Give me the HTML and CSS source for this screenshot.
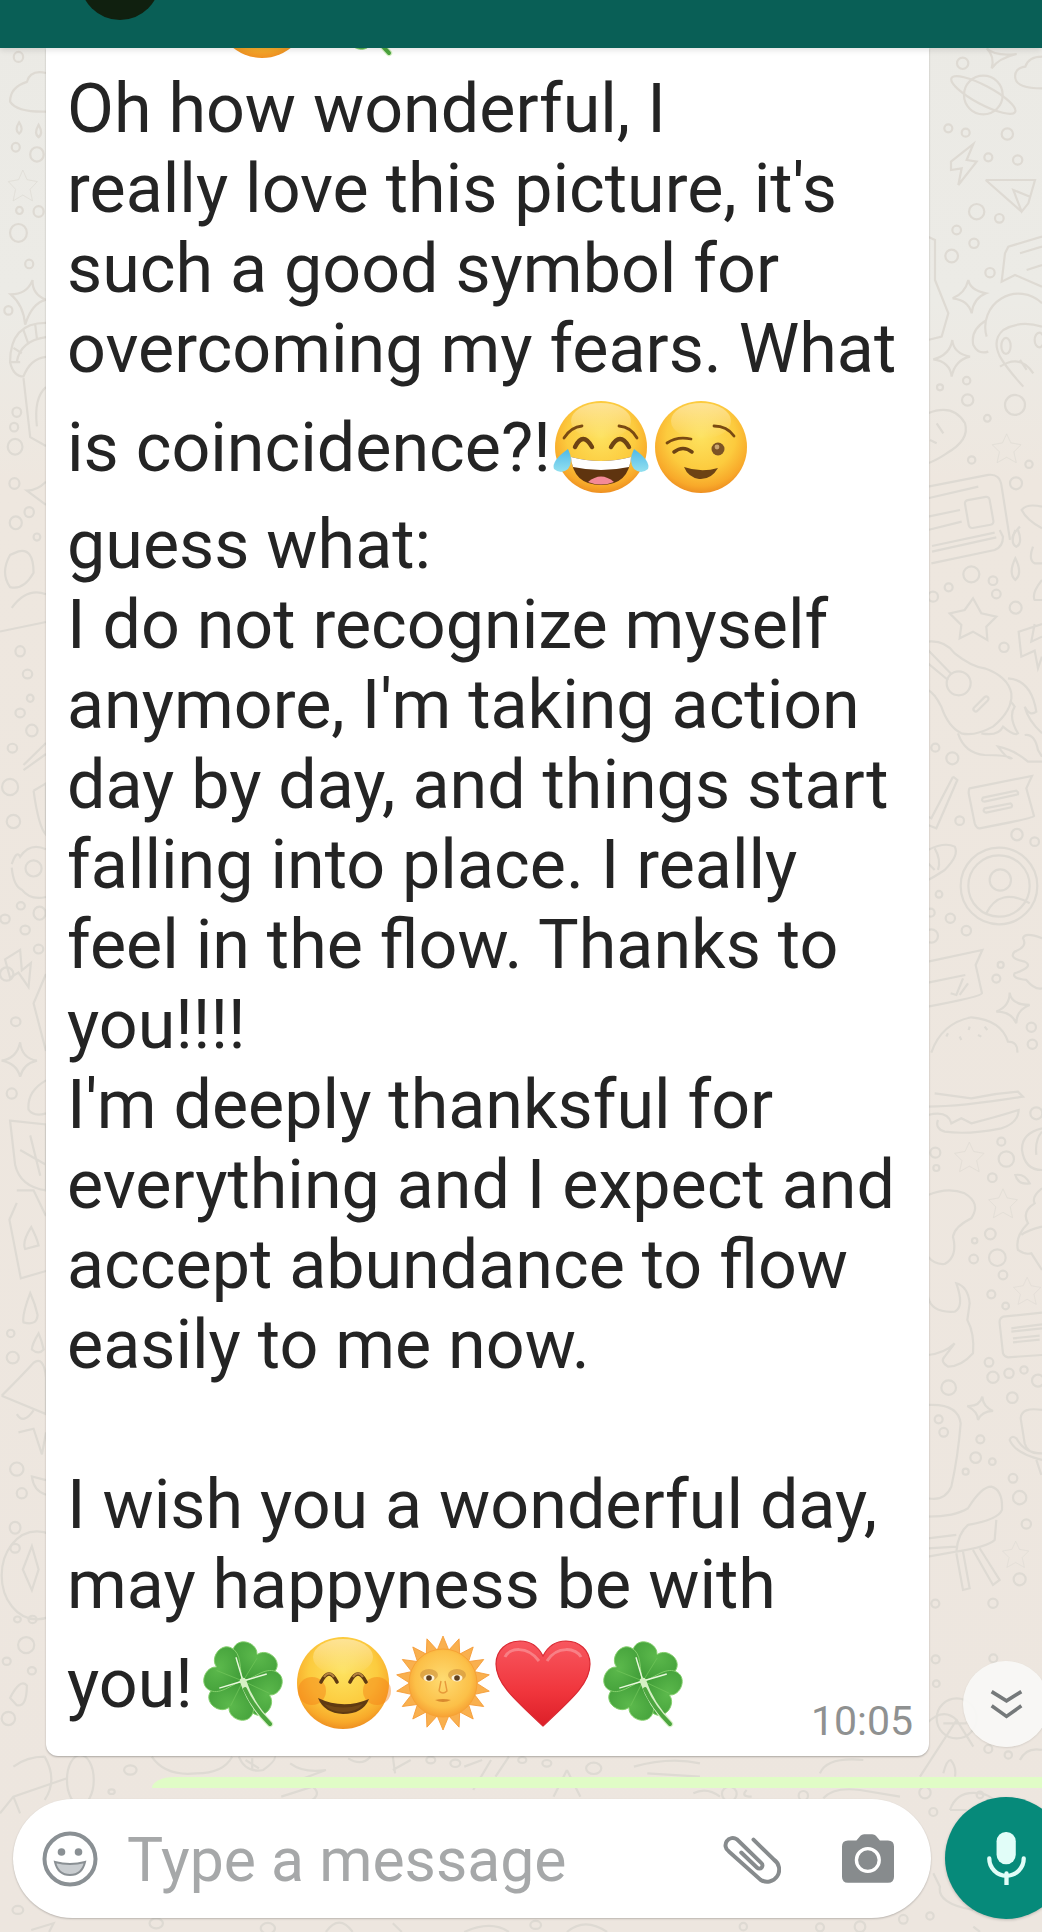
FILE: index.html
```html
<!DOCTYPE html>
<html lang="en">
<head>
<meta charset="utf-8">
<title>Chat</title>
<link rel="stylesheet" href="styles.css">
</head>
<body>
<div class="page">
  <svg class="wallpaper" viewBox="0 0 1042 1932" aria-hidden="true">
    <defs>
      <radialGradient id="face" cx="50%" cy="38%" r="62%">
        <stop offset="0" stop-color="#fde25f"/><stop offset=".6" stop-color="#fccb3e"/><stop offset=".88" stop-color="#f8a92a"/><stop offset="1" stop-color="#ee9022"/>
      </radialGradient>
      <linearGradient id="sheen" x1="0" y1="0" x2="0" y2="1">
        <stop offset="0" stop-color="#fff" stop-opacity=".45"/><stop offset="1" stop-color="#fff" stop-opacity="0"/>
      </linearGradient>
      <linearGradient id="tear" x1="0" y1="0" x2="0" y2="1">
        <stop offset="0" stop-color="#4fb9e8"/><stop offset="1" stop-color="#93e0ef"/>
      </linearGradient>
      <linearGradient id="heartfill" x1="0" y1="0" x2="0" y2="1">
        <stop offset="0" stop-color="#f8575f"/><stop offset=".6" stop-color="#f0353c"/><stop offset="1" stop-color="#dc1f28"/>
      </linearGradient>
      <radialGradient id="sunface" cx="50%" cy="45%" r="55%">
        <stop offset="0" stop-color="#fedb72"/><stop offset=".75" stop-color="#fcc048"/><stop offset="1" stop-color="#f7a234"/>
      </radialGradient>
      <radialGradient id="leaf" cx="50%" cy="25%" r="75%">
        <stop offset="0" stop-color="#5cb94c"/><stop offset="1" stop-color="#3d9a36"/>
      </radialGradient>
      <symbol id="ds" viewBox="0 0 100 100"><path d="M50 2 L64 32 L98 38 L74 62 L82 98 L50 80 L18 98 L26 62 L2 38 L36 32Z"/></symbol>

      <symbol id="e-joy" viewBox="0 0 100 100">
        <circle cx="50" cy="50" r="46" fill="url(#face)"/>
        <ellipse cx="50" cy="24" rx="30" ry="18" fill="url(#sheen)"/>
        <path d="M13 41 Q20 30 31 29 M68 29 Q80 30 86 41" fill="none" stroke="#7a4a12" stroke-width="2.8" stroke-linecap="round"/>
        <path d="M24 50 Q32 34 41 50 M60 50 Q69 34 78 50" fill="none" stroke="#6d4314" stroke-width="4.4" stroke-linecap="round"/>
        <path d="M20 60 Q50 68 80 60 Q78 88 50 88 Q22 88 20 60Z" fill="#5f340f"/>
        <path d="M20 60 Q50 68 80 60 Q80 65 78 70 Q50 76 22 70 Q20 65 20 60Z" fill="#fff"/>
        <path d="M37 85 Q50 74 63 85 Q50 90 37 85Z" fill="#f48a98"/>
        <path d="M17 52 Q23 64 17 72 Q10 78 3 72 Q0 64 17 52Z" fill="url(#tear)"/>
        <path d="M83 52 Q77 64 83 72 Q90 78 97 72 Q100 64 83 52Z" fill="url(#tear)"/>
      </symbol>

      <symbol id="e-wink" viewBox="0 0 100 100">
        <circle cx="50" cy="50" r="46" fill="url(#face)"/>
        <ellipse cx="50" cy="24" rx="30" ry="18" fill="url(#sheen)"/>
        <path d="M16 46 Q26 39 40 42 M63 29 Q76 29 83 39" fill="none" stroke="#7a4a12" stroke-width="2.8" stroke-linecap="round"/>
        <path d="M23 55 Q32 48 41 55" fill="none" stroke="#6d4314" stroke-width="3.6" stroke-linecap="round"/>
        <circle cx="67" cy="52" r="6.5" fill="#7b5326"/>
        <circle cx="66" cy="50" r="2.4" fill="#c9a570"/>
        <path d="M33 70 Q50 76 67 71 Q60 83 48 82 Q37 80 33 70Z" fill="#6d4314"/>
      </symbol>

      <symbol id="e-smile" viewBox="0 0 100 100">
        <circle cx="50" cy="50" r="46" fill="url(#face)"/>
        <ellipse cx="50" cy="24" rx="30" ry="18" fill="url(#sheen)"/>
        <circle cx="19" cy="58" r="14" fill="#f47f16" opacity=".45"/>
        <circle cx="84" cy="58" r="14" fill="#f47f16" opacity=".45"/>
        <path d="M28 49 Q36 33 44 49 M57 49 Q65 33 73 49" fill="none" stroke="#5f3a12" stroke-width="3.6" stroke-linecap="round"/>
        <path d="M31 44 Q36 37 41 44 M60 44 Q65 37 70 44" fill="none" stroke="#b58340" stroke-width="2"/>
        <path d="M25 65 Q50 77 76 66 Q70 81 50 81 Q31 80 25 65Z" fill="#5f3a12"/>
        <path d="M31 71 Q50 78 70 71 Q64 79 50 79 Q38 79 31 71Z" fill="#8a5a1c" opacity=".45"/>
      </symbol>

      <symbol id="e-sun" viewBox="0 0 100 100">
        <g fill="#f9b04e" stroke="#f59a35" stroke-width=".8" stroke-linejoin="round">
          <polygon points="50,3 43,20 57,20"/>
          <polygon points="50,3 43,20 57,20" transform="rotate(20 50 50)"/>
          <polygon points="50,3 43,20 57,20" transform="rotate(40 50 50)"/>
          <polygon points="50,3 43,20 57,20" transform="rotate(60 50 50)"/>
          <polygon points="50,3 43,20 57,20" transform="rotate(80 50 50)"/>
          <polygon points="50,3 43,20 57,20" transform="rotate(100 50 50)"/>
          <polygon points="50,3 43,20 57,20" transform="rotate(120 50 50)"/>
          <polygon points="50,3 43,20 57,20" transform="rotate(140 50 50)"/>
          <polygon points="50,3 43,20 57,20" transform="rotate(160 50 50)"/>
          <polygon points="50,3 43,20 57,20" transform="rotate(180 50 50)"/>
          <polygon points="50,3 43,20 57,20" transform="rotate(200 50 50)"/>
          <polygon points="50,3 43,20 57,20" transform="rotate(220 50 50)"/>
          <polygon points="50,3 43,20 57,20" transform="rotate(240 50 50)"/>
          <polygon points="50,3 43,20 57,20" transform="rotate(260 50 50)"/>
          <polygon points="50,3 43,20 57,20" transform="rotate(280 50 50)"/>
          <polygon points="50,3 43,20 57,20" transform="rotate(300 50 50)"/>
          <polygon points="50,3 43,20 57,20" transform="rotate(320 50 50)"/>
          <polygon points="50,3 43,20 57,20" transform="rotate(340 50 50)"/>
        </g>
        <circle cx="50" cy="50" r="34" fill="url(#sunface)" stroke="#f7a234" stroke-width="1"/>
        <ellipse cx="36" cy="42" rx="9" ry="6" fill="#c98a3a" opacity=".55"/>
        <ellipse cx="64" cy="42" rx="9" ry="6" fill="#c98a3a" opacity=".55"/>
        <ellipse cx="36" cy="45" rx="5.5" ry="3.4" fill="#fff3d8"/>
        <ellipse cx="64" cy="45" rx="5.5" ry="3.4" fill="#fff3d8"/>
        <circle cx="36" cy="45" r="2.8" fill="#5f4020"/>
        <circle cx="64" cy="45" r="2.8" fill="#5f4020"/>
        <path d="M46 58 Q50 62 54 58 L52 48 M48 48 L46 58" fill="none" stroke="#e79a3a" stroke-width="1.4"/>
        <path d="M42 67 Q50 65 58 67 Q50 71 42 67Z" fill="#d98a2e"/>
      </symbol>

      <symbol id="e-heart" viewBox="0 0 100 100">
        <path d="M50 93 C20 65 3 50 3 31 C3 17 14 8 27 8 C37 8 45 13 50 23 C55 13 63 8 73 8 C86 8 97 17 97 31 C97 50 80 65 50 93Z" fill="url(#heartfill)" stroke="#d92a33" stroke-width="1.2"/>
        <path d="M12 24 C16 15 34 12 46 28 M54 28 C64 12 84 15 88 24" fill="none" stroke="#fff" stroke-opacity=".28" stroke-width="3"/>
      </symbol>

      <symbol id="e-clover" viewBox="0 0 100 100">
        <g transform="translate(6 5.8) scale(.88)">
          <g fill="url(#leaf)" stroke="#84cf6b" stroke-width="1">
            <path d="M50 47 C40 38 22 32 23 18 C24 6 41 3 48 11 L50 14 L52 11 C59 3 76 6 77 18 C78 32 60 38 50 47Z" transform="rotate(28 50 48)"/>
            <path d="M50 47 C40 38 22 32 23 18 C24 6 41 3 48 11 L50 14 L52 11 C59 3 76 6 77 18 C78 32 60 38 50 47Z" transform="rotate(118 50 48)"/>
            <path d="M50 47 C40 38 22 32 23 18 C24 6 41 3 48 11 L50 14 L52 11 C59 3 76 6 77 18 C78 32 60 38 50 47Z" transform="rotate(208 50 48)"/>
            <path d="M50 47 C40 38 22 32 23 18 C24 6 41 3 48 11 L50 14 L52 11 C59 3 76 6 77 18 C78 32 60 38 50 47Z" transform="rotate(298 50 48)"/>
          </g>
          <path d="M50 48 L66 22 M50 48 L80 62 M50 48 L36 76 M50 48 L20 36" stroke="#6cc156" stroke-width="1"/>
          <path d="M50 48 L42 21 M50 48 L77 40 M50 48 L23 56" stroke="#e8f7dc" stroke-width="1.6"/>
        </g>
        <path d="M50 48 Q58 72 77 91" fill="none" stroke="#d5f0c4" stroke-width="6.4" stroke-linecap="round"/>
        <path d="M52 56 Q60 74 77 91" fill="none" stroke="#4da63f" stroke-width="4" stroke-linecap="round"/>
      </symbol>
    </defs>

    <g class="doodle">
      <g transform="translate(920 40) scale(.3333)">
        <circle cx="190" cy="165" r="58"/><ellipse cx="190" cy="165" rx="108" ry="28" transform="rotate(28 190 165)"/>
        <circle cx="128" cy="70" r="17"/><path d="M200 25 Q225 50 290 42 Q235 55 215 85 Q225 50 200 25Z"/>
        <path d="M366 50 Q326 50 316 80 Q281 85 286 115 Q291 145 366 145"/>
        <circle cx="85" cy="265" r="12"/><circle cx="137" cy="278" r="12"/><circle cx="262" cy="282" r="17"/><circle cx="205" cy="352" r="12"/><circle cx="293" cy="360" r="14"/><circle cx="170" cy="515" r="23"/><circle cx="238" cy="535" r="13"/><circle cx="110" cy="570" r="13"/><circle cx="162" cy="610" r="14"/><circle cx="95" cy="648" r="19"/><circle cx="210" cy="698" r="14"/><circle cx="60" cy="1042" r="9"/><circle cx="140" cy="1022" r="11"/><circle cx="143" cy="1080" r="17"/><circle cx="202" cy="1135" r="10"/><circle cx="155" cy="1260" r="11"/><circle cx="288" cy="1330" r="18"/><circle cx="327" cy="1273" r="11"/>
        <path d="M93 365 L160 312 L140 360 L170 365 L115 435 L125 385 L93 390Z"/>
        <path d="M197 420 L345 420 L325 490 L305 515 L280 450 L330 470 M197 420 L305 515"/>
        <path d="M366 590 L265 620 L255 640 L245 725 L285 705 L366 740 M300 640 L366 620 M320 690 L366 675"/>
        <path d="M145 720 Q150 750 198 760 Q160 775 155 820 Q145 780 98 775 Q135 760 145 720Z"/>
        <path d="M97 900 Q100 940 150 950 Q105 960 95 1010 Q90 965 40 958 Q90 945 97 900Z"/>
        <path d="M200 890 A100 100 0 0 1 366 790 M200 840 Q150 870 160 915 Q175 945 205 935 M366 860 Q300 840 250 870 Q215 900 240 950 Q260 985 310 1040 M240 980 Q300 940 340 1000 M300 960 L320 990"/>
        <ellipse cx="258" cy="918" rx="14" ry="24"/><ellipse cx="358" cy="900" rx="14" ry="22"/><circle cx="285" cy="1095" r="30"/>
        <use href="#ds" x="215" y="1180" width="90" height="90"/>
        <path d="M24 1120 Q100 1090 135 1150 Q150 1200 80 1240 Q50 1260 24 1270 M50 1150 L70 1180 M30 1200 L50 1210"/>
        <path d="M24 1340 L205 1305 Q240 1300 245 1340 L270 1500 M24 1375 L175 1340 M24 1430 L120 1410 M24 1470 L125 1445"/>
        <rect x="140" y="1375" width="75" height="85" rx="10" transform="rotate(-10 177 1417)"/>
        <path d="M24 590 L45 600 L45 720 L85 820 L65 890 L24 900 M366 1400 Q320 1390 305 1410 Q320 1440 366 1465 M300 1460 Q270 1490 280 1500"/>
      </g>

      <g transform="translate(928 530) scale(.3333)">
        <path d="M10 100 L200 60 Q225 50 225 20 L215 0 M12 65 L205 22 M12 48 L200 8"/>
        <path d="M262 85 Q240 130 262 150 Q285 130 262 85Z M315 50 Q300 90 320 100 L342 100 M342 150 Q310 190 320 210 L342 210 M262 0 Q245 40 265 50 Q285 40 270 0"/>
        <circle cx="130" cy="133" r="24"/><circle cx="195" cy="152" r="13"/><circle cx="62" cy="172" r="12"/><circle cx="205" cy="192" r="13"/><circle cx="15" cy="200" r="15"/><circle cx="263" cy="233" r="18"/><circle cx="228" cy="352" r="14"/>
        <path d="M135 205 L160 250 L205 260 L175 290 L178 330 L135 305 L95 325 L100 285 L65 250 L110 240Z"/>
        <path d="M342 282 L272 305 L280 380 L320 362 L330 415 L342 380 M320 282 L310 335 L342 320"/>
        <path d="M0 335 Q50 330 80 370 Q130 410 170 415 Q240 440 250 490 Q255 540 195 590 Q140 620 100 610 Q60 590 40 530 Q20 490 0 480"/>
        <circle cx="92" cy="460" r="36"/><path d="M0 360 L70 432 M0 400 L60 450"/>
        <rect x="130" y="515" width="58" height="14" rx="7" transform="rotate(-45 159 522)"/>
        <path d="M90 610 Q110 670 170 675 Q240 675 250 685 Q240 690 210 650 Q260 660 300 695 L342 695 M160 610 Q210 620 225 590 Q260 620 270 610 Q240 560 260 530 Q250 515 245 515 M240 445 Q310 450 325 545 Q305 560 290 530 Q300 570 342 610 M290 615 Q320 610 330 660 L342 680"/>
        <circle cx="22" cy="653" r="12"/><circle cx="73" cy="685" r="18"/><circle cx="95" cy="872" r="13"/><circle cx="267" cy="914" r="17"/><circle cx="320" cy="935" r="13"/><circle cx="33" cy="1093" r="10"/><circle cx="8" cy="1148" r="12"/><circle cx="67" cy="1165" r="14"/><circle cx="115" cy="1202" r="14"/><circle cx="10" cy="1218" r="20"/><circle cx="218" cy="1305" r="9"/><circle cx="205" cy="1346" r="12"/><circle cx="310" cy="1492" r="14"/><circle cx="313" cy="1543" r="14"/>
        <path d="M75 740 L88 750 L25 895 L0 885 M75 740 L10 865 L0 860"/>
        <path d="M125 775 L312 738 L295 775 L318 858 Q315 865 155 895 Q145 895 140 880 L122 790 Q122 778 125 775Z M165 803 L265 782 Q272 785 270 793 L170 815 Q158 815 165 803Z M170 835 L248 820 Q255 825 250 832 L175 848 Q162 845 170 835Z"/>
        <path d="M0 960 Q50 935 80 950 Q95 975 50 1020 Q20 1040 0 1050 M20 955 Q40 990 30 1020 M0 1000 L20 1020"/>
        <circle cx="213" cy="1068" r="115"/><circle cx="213" cy="1068" r="92"/><circle cx="217" cy="1050" r="32"/><path d="M175 1150 Q215 1070 305 1120"/>
        <path d="M342 1225 Q290 1205 285 1225 Q300 1250 260 1265 Q240 1285 290 1295 Q320 1310 260 1330 Q250 1345 295 1350 Q320 1380 342 1375"/>
        <path d="M0 1295 L163 1260 L143 1305 L162 1390 Q160 1400 0 1430 M0 1358 L112 1335 M68 1390 L85 1395 L105 1345 M95 1395 L120 1360"/>
        <path d="M245 1388 Q250 1425 305 1425 Q265 1440 265 1480 Q250 1445 205 1445 Q245 1430 245 1388Z"/>
        <path d="M10 1568 Q40 1480 130 1462 Q220 1470 240 1535 Q270 1535 268 1568 M60 1510 L55 1520 M95 1520 L100 1530 M125 1490 L122 1500 M150 1515 L160 1520 M170 1490 L178 1500"/>
      </g>

      <g transform="translate(928 1090) scale(.3333)">
        <path d="M0 50 Q100 50 285 20 L270 5 Q200 10 130 25 L20 10 M0 75 Q60 60 70 100 L100 85 L130 100 Q210 80 272 60 Q270 100 220 115 Q120 135 50 125 Q20 115 30 90"/>
        <circle cx="325" cy="70" r="18"/><circle cx="220" cy="155" r="12"/><circle cx="22" cy="188" r="15"/><circle cx="25" cy="234" r="9"/><circle cx="235" cy="207" r="23"/><circle cx="193" cy="263" r="13"/><circle cx="187" cy="432" r="16"/><circle cx="140" cy="452" r="8"/><circle cx="137" cy="507" r="13"/><circle cx="208" cy="503" r="25"/><circle cx="225" cy="555" r="13"/><circle cx="190" cy="613" r="12"/><circle cx="233" cy="648" r="10"/><circle cx="183" cy="817" r="13"/><circle cx="195" cy="862" r="17"/><circle cx="243" cy="850" r="14"/><circle cx="288" cy="840" r="11"/><circle cx="330" cy="872" r="18"/><circle cx="62" cy="893" r="22"/><circle cx="253" cy="923" r="16"/><circle cx="32" cy="988" r="12"/><circle cx="47" cy="1027" r="13"/><circle cx="157" cy="1048" r="12"/><circle cx="143" cy="1103" r="16"/><circle cx="193" cy="1115" r="10"/><circle cx="113" cy="1145" r="9"/><circle cx="255" cy="1165" r="13"/><circle cx="275" cy="1223" r="20"/><circle cx="295" cy="1302" r="14"/><circle cx="275" cy="1468" r="18"/><circle cx="22" cy="1541" r="12"/><circle cx="195" cy="1540" r="14"/>
        <use href="#ds" x="78" y="155" width="92" height="92"/><use href="#ds" x="180" y="295" width="90" height="90"/><use href="#ds" x="255" y="560" width="85" height="85"/><use href="#ds" x="222" y="1352" width="82" height="82"/>
        <path d="M0 315 Q60 290 110 310 Q160 340 130 385 Q80 410 75 440 Q90 500 50 522 Q20 525 0 500"/>
        <path d="M262 255 Q290 250 305 280 Q270 285 262 255Z"/>
        <path d="M342 295 Q310 320 320 340 Q280 365 300 400 Q260 440 270 480 Q290 495 310 490 L342 540 M342 410 Q300 420 280 435"/>
        <path d="M0 620 Q10 670 80 665 Q110 650 85 580 Q120 590 125 640 L118 690 Q140 730 135 790 Q100 830 60 830 Q35 815 50 800 L80 760 Q50 790 0 795"/>
        <path d="M342 668 L225 680 Q213 685 215 700 L225 790 Q228 800 240 802 L342 795 M250 715 L342 703 M250 725 L342 715 M255 745 L335 737 M255 757 L335 749"/>
        <path d="M163 920 Q165 950 195 963 Q160 965 150 990 Q150 965 118 948 Q155 950 163 920Z"/>
        <path d="M342 960 Q280 950 278 985 L290 1060 Q300 1095 342 1090 M342 1110 Q260 1090 245 1050 Q250 1035 265 1045 Q290 1090 342 1090 M325 1110 L340 1155"/>
        <path d="M0 945 Q90 940 98 1000 Q90 1100 70 1190 Q50 1235 0 1225"/>
        <path d="M0 1280 Q80 1280 120 1255 Q160 1190 190 1190 Q225 1200 222 1260 Q210 1290 120 1305 Q90 1330 85 1385 L0 1400 M0 1345 L85 1335 M0 1375 L85 1370 M85 1390 L105 1500 L125 1495 L105 1385 M135 1380 L195 1485 L215 1470 L155 1375 M205 1290 L200 1350 Q180 1370 85 1385"/>
        <path d="M342 115 Q280 130 282 180 Q290 240 342 240 M342 125 Q320 150 325 195"/>
      </g>

      <g transform="translate(0 48) scale(.3356 .357)">
        <circle cx="55" cy="25" r="14"/><circle cx="47" cy="278" r="12"/><circle cx="110" cy="298" r="20"/><circle cx="58" cy="455" r="10"/><circle cx="115" cy="458" r="15"/><circle cx="55" cy="518" r="25"/><circle cx="87" cy="605" r="12"/><circle cx="25" cy="735" r="12"/><circle cx="50" cy="1020" r="13"/><circle cx="42" cy="1062" r="12"/><circle cx="45" cy="1117" r="22"/><circle cx="43" cy="1220" r="15"/><circle cx="87" cy="1300" r="14"/><circle cx="47" cy="1330" r="18"/><circle cx="110" cy="1370" r="10"/>
        <path d="M137 70 Q90 60 80 95 Q30 110 30 150 Q50 180 137 178"/>
        <path d="M57 208 Q42 230 57 240 Q72 230 57 208Z M115 215 Q100 240 115 250 Q130 240 115 215Z"/>
        <use href="#ds" x="22" y="340" width="92" height="90"/>
        <path d="M97 650 Q95 690 137 705 Q95 715 75 775 Q70 720 32 690 Q80 690 97 650Z"/>
        <path d="M137 770 Q30 770 30 880 Q40 920 70 920 Q90 870 137 865 M50 880 Q60 820 137 810 M40 840 L65 855 M70 790 L85 830 M105 775 L110 815 M33 880 L60 880"/>
        <path d="M70 925 L90 1090 L137 1115 M110 1060 Q100 980 137 950 M137 1215 Q110 1240 80 1240 L137 1280"/>
        <path d="M55 1410 Q100 1400 100 1470 Q70 1520 30 1510 Q0 1470 30 1420Z M35 1568 Q80 1510 137 1530"/>
      </g>

      <g transform="translate(0 600) scale(.3356 .7334)">
        <ellipse cx="60" cy="70" rx="14" ry="7"/><ellipse cx="82" cy="101" rx="14" ry="6"/><ellipse cx="90" cy="134" rx="10" ry="5"/><ellipse cx="60" cy="154" rx="14" ry="6"/><ellipse cx="95" cy="178" rx="17" ry="8"/><ellipse cx="37" cy="202" rx="14" ry="6"/><ellipse cx="30" cy="255" rx="24" ry="11"/><ellipse cx="40" cy="302" rx="20" ry="9"/><ellipse cx="100" cy="366" rx="24" ry="11"/><ellipse cx="15" cy="435" rx="14" ry="6"/><ellipse cx="62" cy="417" rx="12" ry="5"/><ellipse cx="75" cy="450" rx="14" ry="6"/><ellipse cx="118" cy="427" rx="18" ry="9"/><ellipse cx="115" cy="476" rx="14" ry="6"/><ellipse cx="20" cy="510" rx="20" ry="9"/><ellipse cx="47" cy="575" rx="14" ry="6"/><ellipse cx="35" cy="673" rx="15" ry="7"/><ellipse cx="32" cy="1000" rx="11" ry="5"/><ellipse cx="38" cy="1033" rx="18" ry="8"/><ellipse cx="50" cy="1185" rx="20" ry="9"/><ellipse cx="65" cy="1218" rx="15" ry="7"/><ellipse cx="45" cy="1293" rx="14" ry="6"/><ellipse cx="52" cy="1390" rx="10" ry="4"/><ellipse cx="97" cy="1390" rx="12" ry="5"/><ellipse cx="78" cy="1425" rx="24" ry="11"/><ellipse cx="20" cy="1447" rx="12" ry="5"/><ellipse cx="95" cy="1460" rx="12" ry="5"/><ellipse cx="25" cy="1525" rx="20" ry="9"/>
        <path d="M0 43 L137 30 M70 225 L137 195 M70 232 L137 210 M100 260 L137 250 L137 320 Q115 310 100 260 M35 360 Q50 340 60 350 Q90 330 137 340 M35 365 Q40 390 65 395 Q90 410 137 405"/>
        <path d="M15 490 L60 477 L65 505 L92 495 L85 528 L55 508 L30 515Z M60 603 Q65 625 110 628 Q70 632 60 650 Q50 632 5 628 Q50 625 60 603Z M137 510 L100 550 L137 615 M137 655 Q80 670 85 695 Q100 705 137 700"/>
        <path d="M30 710 L137 715 L137 805 Q60 800 45 770Z M60 750 L137 770 M90 730 L120 785 M50 805 L100 805 L137 840 M50 822 L28 845 L62 925 L137 915 M93 855 Q65 875 75 885 L115 880 Q110 870 93 855Z M90 945 Q65 975 70 985 Q110 990 112 975 Q105 960 90 945Z M115 1000 Q95 1015 95 1022 Q115 1030 130 1022 Q125 1010 115 1000Z"/>
        <path d="M5 1085 Q60 1060 100 1040 Q130 1030 137 1060 L137 1110L5 1085 M50 1110 Q70 1125 100 1105 M55 1135 L100 1130 L125 1165 L137 1135 M137 1200 L95 1195 Q100 1215 137 1220"/>
        <ellipse cx="110" cy="1330" rx="105" ry="60"/><ellipse cx="45" cy="1265" rx="16" ry="8"/><path d="M95 1290 L68 1322 L95 1350 L115 1322Z M30 1497 Q60 1470 80 1480 Q80 1510 50 1507Z"/>
      </g>

      <g transform="translate(0 1600) scale(.4464 .3333)">
        <ellipse cx="180" cy="540" rx="30" ry="75"/><path d="M0 640 L30 590 L150 535 M45 640 L30 590 M100 470 Q130 540 100 600 M30 500 Q60 470 100 470"/>
        <circle cx="292" cy="510" r="14"/><circle cx="250" cy="575" r="7"/><path d="M340 470 Q370 530 440 520 Q500 520 520 470 M535 470 Q550 520 590 510 Q620 480 615 470 M550 480 L580 505 M565 475 L565 510"/>
        <path d="M650 490 Q680 520 730 510 L670 540 M630 590 L700 560 Q720 580 700 600 M780 475 Q810 500 830 470 M880 510 L920 480 M880 470 L885 520"/>
        <circle cx="965" cy="480" r="10"/><circle cx="1020" cy="490" r="11"/><path d="M1040 500 L1080 480 M1100 480 L1060 570 M1140 470 L1110 530"/>
        <circle cx="1170" cy="480" r="9"/><circle cx="1225" cy="490" r="10"/><circle cx="1330" cy="505" r="17"/><path d="M1270 510 L1240 590 M1270 510 L1300 590 M1420 500 Q1500 470 1568 490 M1450 520 L1568 530"/>
        <circle cx="350" cy="970" r="15"/><path d="M70 990 L120 970 L110 996 M730 996 Q760 940 790 996 M880 970 L900 996 M1040 996 Q1100 960 1140 996 M1270 996 Q1310 950 1360 996"/>
        <circle cx="40" cy="930" r="12"/><circle cx="600" cy="985" r="16"/><circle cx="1200" cy="975" r="12"/>
      </g>
      <g transform="translate(680 1640) scale(.3333)">
        <path d="M420 400 Q440 350 550 360 M740 250 Q790 200 830 240 L720 410 M790 250 L860 250 M830 240 L880 320"/>
        <circle cx="830" cy="235" r="60"/><circle cx="767" cy="58" r="12"/><circle cx="769" cy="131" r="10"/><circle cx="925" cy="327" r="12"/><circle cx="985" cy="345" r="11"/><circle cx="940" cy="55" r="12"/><path d="M790 400 Q800 360 812 360 Q830 380 825 410 M1020 360 Q1040 320 1086 330 M40 460 Q80 440 120 470 M200 450 Q180 470 215 470 M430 475 Q460 440 540 450 L660 470"/>
        <circle cx="735" cy="458" r="17"/><circle cx="760" cy="516" r="12"/><circle cx="370" cy="467" r="14"/><circle cx="148" cy="462" r="22"/><circle cx="900" cy="465" r="10"/><path d="M810 510 Q830 450 900 460 Q960 470 940 520 M810 510 L860 510"/>
        <circle cx="750" cy="828" r="11"/><circle cx="670" cy="838" r="13"/><circle cx="540" cy="860" r="16"/><circle cx="420" cy="862" r="12"/><circle cx="190" cy="860" r="11"/><path d="M760 700 L780 740 Q770 790 880 810 M880 860 L900 876"/>
      </g>
    </g>
  </svg>

  <header class="topbar">
    <div class="avatar"></div>
  </header>

  <main class="chat">
    <article class="bubble">
      <div class="peek">
        <svg class="peek-emoji" role="img" aria-label="smiling face"><use href="#e-smile"/></svg>
        <svg class="peek-emoji" role="img" aria-label="four leaf clover"><use href="#e-clover"/></svg>
      </div>
      <p class="msg">Oh how wonderful, I<br>
really love this picture, it's<br>
such a good symbol for<br>
overcoming my fears. What<br>
is coincidence?!<svg class="emoji" role="img" aria-label="tears of joy"><use href="#e-joy"/></svg><svg class="emoji" role="img" aria-label="winking face"><use href="#e-wink"/></svg><br>
guess what:<br>
I do not recognize myself<br>
anymore, I'm taking action<br>
day by day, and things start<br>
falling into place. I really<br>
feel in the flow. Thanks to<br>
you!!!!<br>
I'm deeply thanksful for<br>
everything and I expect and<br>
accept abundance to flow<br>
easily to me now.<br>
<br>
I wish you a wonderful day,<br>
may happyness be with<br>
you!<svg class="emoji" role="img" aria-label="four leaf clover"><use href="#e-clover"/></svg><svg class="emoji" role="img" aria-label="smiling face"><use href="#e-smile"/></svg><svg class="emoji" role="img" aria-label="sun with face"><use href="#e-sun"/></svg><svg class="emoji" role="img" aria-label="red heart"><use href="#e-heart"/></svg><svg class="emoji" role="img" aria-label="four leaf clover"><use href="#e-clover"/></svg></p>
      <div class="time">10:05</div>
    </article>
    <div class="next-bubble"></div>
  </main>

  <button class="scroll-down" aria-label="Scroll to bottom">
    <svg class="chevrons" viewBox="930 155 100 95"><path d="M935 165 L980 193 L1025 165 M935 208 L980 240 L1025 208"/></svg>
  </button>

  <footer class="composer">
    <div class="input">
      <svg class="icon-smile" viewBox="0 0 56 56">
        <circle cx="28" cy="28" r="25.5"/>
        <circle class="solid" cx="19.5" cy="21" r="3.8"/>
        <circle class="solid" cx="36.5" cy="21" r="3.8"/>
        <path class="mouth" d="M13 31 Q28 35 43 31 Q40 44 28 44 Q16 44 13 31Z"/>
      </svg>
      <span class="placeholder">Type a message</span>
      <svg class="icon-clip" viewBox="130 578 175 155">
        <path d="M222 597 L283 657 A29 29 0 0 1 243 718 L147 632 A19 19 0 0 1 172 596 L246 668 A9 9 0 0 1 233 682 L185 636"/>
      </svg>
      <svg class="icon-camera" viewBox="487 573 155 145">
        <path class="body" d="M487 610 Q487 592 505 592 L530 592 L542 578 Q546 573 553 573 L577 573 Q584 573 588 578 L600 592 L624 592 Q642 592 642 610 L642 700 Q642 718 624 718 L505 718 Q487 718 487 700Z"/>
        <circle class="lens" cx="564" cy="650" r="34"/>
      </svg>
    </div>
    <button class="mic" aria-label="Record voice message">
      <svg class="icon-mic" viewBox="922 575 116 160">
        <rect x="950" y="575" width="58" height="97" rx="28"/>
        <path d="M928 655 A51 51 0 0 0 1032 655 M980 700 L980 735"/>
      </svg>
    </button>
  </footer>
</div>
</body>
</html>
```

FILE: styles.css
```css
* { box-sizing: border-box; }

html, body { margin: 0; padding: 0; }

body {
  width: 1042px;
  height: 1932px;
  overflow: hidden;
  font-family: Roboto, "Liberation Sans", sans-serif;
}

.page {
  position: relative;
  width: 1042px;
  height: 1932px;
  overflow: hidden;
  display: flex;
  flex-direction: column;
  background: linear-gradient(#ebeae5 0, #ecebe6 300px, #eee7df 480px, #ede6df 100%);
}

.wallpaper {
  position: absolute;
  left: 0;
  top: 0;
  width: 1042px;
  height: 1932px;
}

.doodle { fill: none; stroke: #dedad3; stroke-width: 2.2; }
.doodle * { vector-effect: non-scaling-stroke; }

.topbar {
  position: relative;
  z-index: 3;
  flex: none;
  height: 48px;
  background: #095f56;
  box-shadow: 0 2px 6px rgba(0, 0, 0, .12);
  overflow: hidden;
  padding-left: 80px;
}

.avatar {
  width: 80px;
  height: 80px;
  margin-top: -60px;
  border-radius: 50%;
  background: #10200f;
}

.chat {
  position: relative;
  z-index: 1;
  flex: none;
  height: 1749px;
}

.bubble {
  display: flow-root;
  width: 883px;
  height: 1708px;
  margin-left: 46px;
  padding: 0 16px 0 21px;
  background: #fff;
  border-radius: 0 0 12px 12px;
  box-shadow: 0 1px 2px rgba(0, 0, 0, .28);
}

.peek {
  display: flex;
  height: 100px;
  margin-top: -86px;
  margin-bottom: 7px;
  padding-left: 145px;
}

.peek-emoji { width: 100px; height: 100px; flex: none; }

.msg {
  margin: 0;
  font-size: 68.2px;
  line-height: 80px;
  color: #242424;
  white-space: nowrap;
}

.emoji {
  display: inline-block;
  width: 100px;
  height: 100px;
  margin: 8px 0;
  vertical-align: -34px;
}

.time {
  margin-top: -44px;
  text-align: right;
  font-size: 41px;
  line-height: 48px;
  color: #8f9191;
}

.next-bubble {
  height: 11px;
  margin: 21px 0 0 152px;
  background: #e0fcc6;
  border-top-left-radius: 22px 11px;
}

.scroll-down {
  position: absolute;
  z-index: 2;
  left: 963px;
  top: 1661px;
  width: 86px;
  height: 86px;
  padding: 0;
  border: 0;
  border-radius: 50%;
  background: rgba(249, 248, 246, .92);
  box-shadow: 0 1px 2px rgba(0, 0, 0, .1);
  display: flex;
  align-items: center;
  justify-content: center;
}

.chevrons { width: 33px; height: 32px; fill: none; stroke: #75797a; stroke-width: 11; }

.composer {
  position: relative;
  z-index: 1;
  flex: none;
  display: flex;
  align-items: center;
  gap: 14px;
  padding-left: 13px;
  height: 122px;
}

.input {
  flex: none;
  width: 918px;
  height: 119px;
  margin-top: 1px;
  display: flex;
  align-items: center;
  padding: 0 37px 0 29px;
  background: #fff;
  border-radius: 60px;
  box-shadow: 0 1px 2px rgba(0, 0, 0, .22);
}

.icon-smile { flex: none; width: 56px; height: 56px; fill: none; stroke: #8a9094; stroke-width: 4; }
.icon-smile .solid { fill: #8a9094; stroke: none; }
.icon-smile .mouth { fill: #c9cdd0; stroke: #8a9094; stroke-width: 2; }

.placeholder {
  margin-left: 29px;
  padding-top: 3px;
  font-size: 60.7px;
  color: #a6a8a9;
}

.icon-clip {
  flex: none;
  width: 58px;
  height: 52px;
  margin-left: auto;
  fill: none;
  stroke: #878b8d;
  stroke-width: 12;
  stroke-linecap: round;
}

.icon-camera { flex: none; width: 52px; height: 49px; margin-left: 61px; }
.icon-camera .body { fill: #878b8d; }
.icon-camera .lens { fill: #878b8d; stroke: #fff; stroke-width: 10; }

.mic {
  flex: none;
  width: 122px;
  height: 122px;
  padding: 0;
  border: 0;
  border-radius: 50%;
  background: #068a7a;
  box-shadow: 0 1px 3px rgba(0, 0, 0, .2);
  display: flex;
  align-items: center;
  justify-content: center;
}

.icon-mic { width: 39px; height: 53px; fill: #e1fdf8; stroke: #e1fdf8; }
.icon-mic rect { stroke: none; }
.icon-mic path { fill: none; stroke-width: 13; stroke-linecap: round; }
```
